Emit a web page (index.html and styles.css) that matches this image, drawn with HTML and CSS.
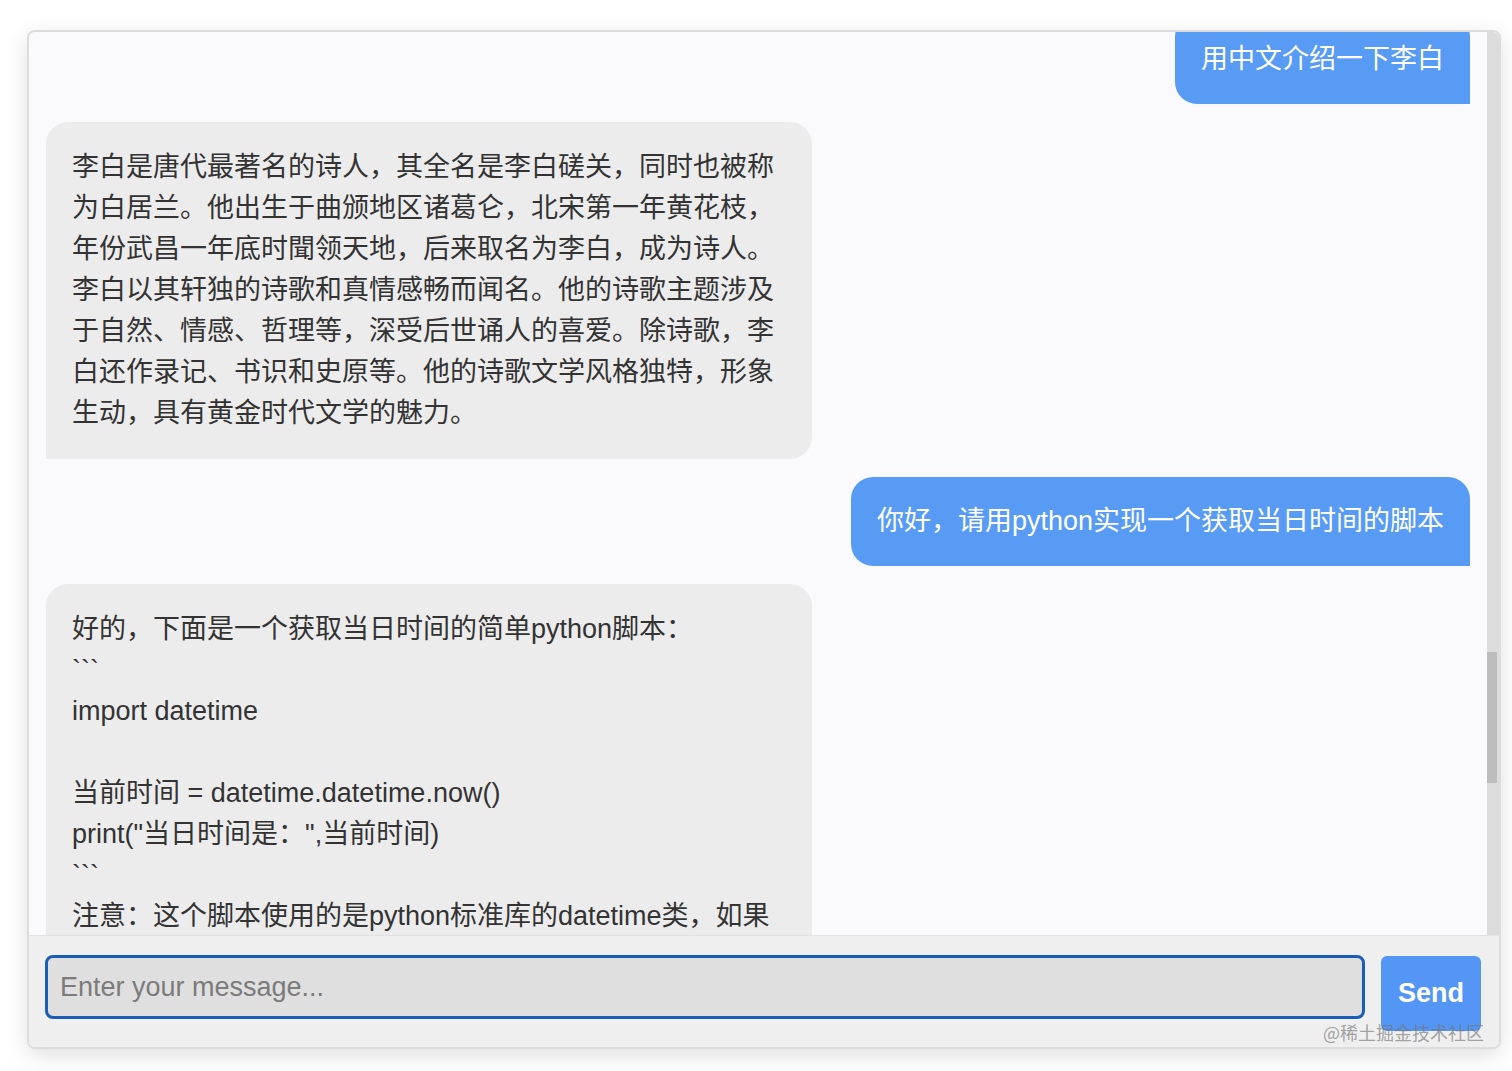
FILE: index.html
```html
<!DOCTYPE html>
<html lang="zh-CN">
<head>
<meta charset="utf-8">
<title>Chat</title>
<link rel="stylesheet" href="styles.css">
</head>
<body>
<div class="page">
  <div class="chat">
    <div class="messages-wrap">
      <div class="messages">
        <div class="list">
          <div class="bubble user">用中文介绍一下李白</div>
          <div class="bubble ai">李白是唐代最著名的诗人，其全名是李白磋关，同时也被称为白居兰。他出生于曲颁地区诸葛仑，北宋第一年黄花枝，年份武昌一年底时聞领天地，后来取名为李白，成为诗人。李白以其轩独的诗歌和真情感畅而闻名。他的诗歌主题涉及于自然、情感、哲理等，深受后世诵人的喜爱。除诗歌，李白还作录记、书识和史原等。他的诗歌文学风格独特，形象生动，具有黄金时代文学的魅力。</div>
          <div class="bubble user">你好，请用python实现一个获取当日时间的脚本</div>
          <div class="bubble ai pre">好的，下面是一个获取当日时间的简单python脚本：
&#96;&#96;&#96;
import datetime

当前时间 = datetime.datetime.now()
print("当日时间是：",当前时间)
&#96;&#96;&#96;
注意：这个脚本使用的是python标准库的datetime类，如果
你需要更多的功能，可以使用第三方库。</div>
        </div>
      </div>
      <div class="scrollbar"><div class="thumb"></div></div>
    </div>
    <div class="composer">
      <input class="input" type="text" placeholder="Enter your message..." autofocus>
      <button class="send">Send</button>
    </div>
  </div>
  <div class="watermark">@稀土掘金技术社区</div>
</div>
</body>
</html>
```
FILE: styles.css
```css
* { box-sizing: border-box; }
html, body { margin: 0; padding: 0; background: #ffffff; }
body { font-family: "Liberation Sans", "Noto Sans CJK SC", sans-serif; }

.page {
  position: relative;
  width: 1512px;
  height: 1071px;
  padding: 30px 11px 0 27px;
}

.chat {
  width: 1474px;
  height: 1019px;
  display: flex;
  flex-direction: column;
  border: 2px solid #dcdcdc;
  border-radius: 8px;
  overflow: hidden;
  box-shadow: 0 6px 22px rgba(0, 0, 0, 0.13);
  background: #fafafc;
}

.messages-wrap {
  flex: 1;
  display: flex;
  min-height: 0;
  background: #fafafc;
}

.messages {
  flex: 1;
  overflow: hidden;
  padding: 0 17px;
}

.list {
  display: flex;
  flex-direction: column;
  gap: 18px;
  margin-top: -17px;
}

.bubble {
  font-family: "Liberation Sans", "Noto Sans CJK SC", sans-serif;
  font-size: 27px;
  line-height: 41px;
  padding: 25px 26px;
  border-radius: 22px;
}

.bubble.ai {
  align-self: flex-start;
  width: 766px;
  background: #ececec;
  color: #333333;
  border-bottom-left-radius: 0;
}

.bubble.user {
  align-self: flex-end;
  background: #589bf5;
  color: #ffffff;
  border-bottom-right-radius: 0;
  padding: 24px 26px;
}

.bubble.pre { white-space: pre-wrap; }

.scrollbar {
  width: 12px;
  background: #dcdcdc;
}

.thumb {
  width: 10px;
  height: 131px;
  margin-top: 620px;
  background: #bdbdbd;
}

.composer {
  height: 112px;
  flex-shrink: 0;
  display: flex;
  align-items: flex-start;
  gap: 16px;
  padding: 19px 18px 0 16px;
  background: #efefef;
  border-top: 1px solid #e2e2e2;
}

.input {
  flex: 1;
  height: 64px;
  border: 3px solid #1b5cb6;
  border-radius: 8px;
  background: #dfdfdf;
  padding: 0 12px;
  font-family: "Liberation Sans", "Noto Sans CJK SC", sans-serif;
  font-size: 27px;
  color: #333;
  outline: none;
}
.input::placeholder { color: #7b7b7b; }

.send {
  width: 100px;
  height: 75px;
  margin-top: 1px;
  border: none;
  border-radius: 6px;
  background: #5396f5;
  color: #ffffff;
  font-family: "Liberation Sans", sans-serif;
  font-weight: bold;
  font-size: 27px;
  padding: 0;
}

.watermark {
  position: absolute;
  right: 28px;
  top: 1019px;
  font-family: "Noto Sans CJK SC", sans-serif;
  font-size: 18px;
  line-height: 26px;
  color: rgba(115, 115, 115, 0.65);
}
```
